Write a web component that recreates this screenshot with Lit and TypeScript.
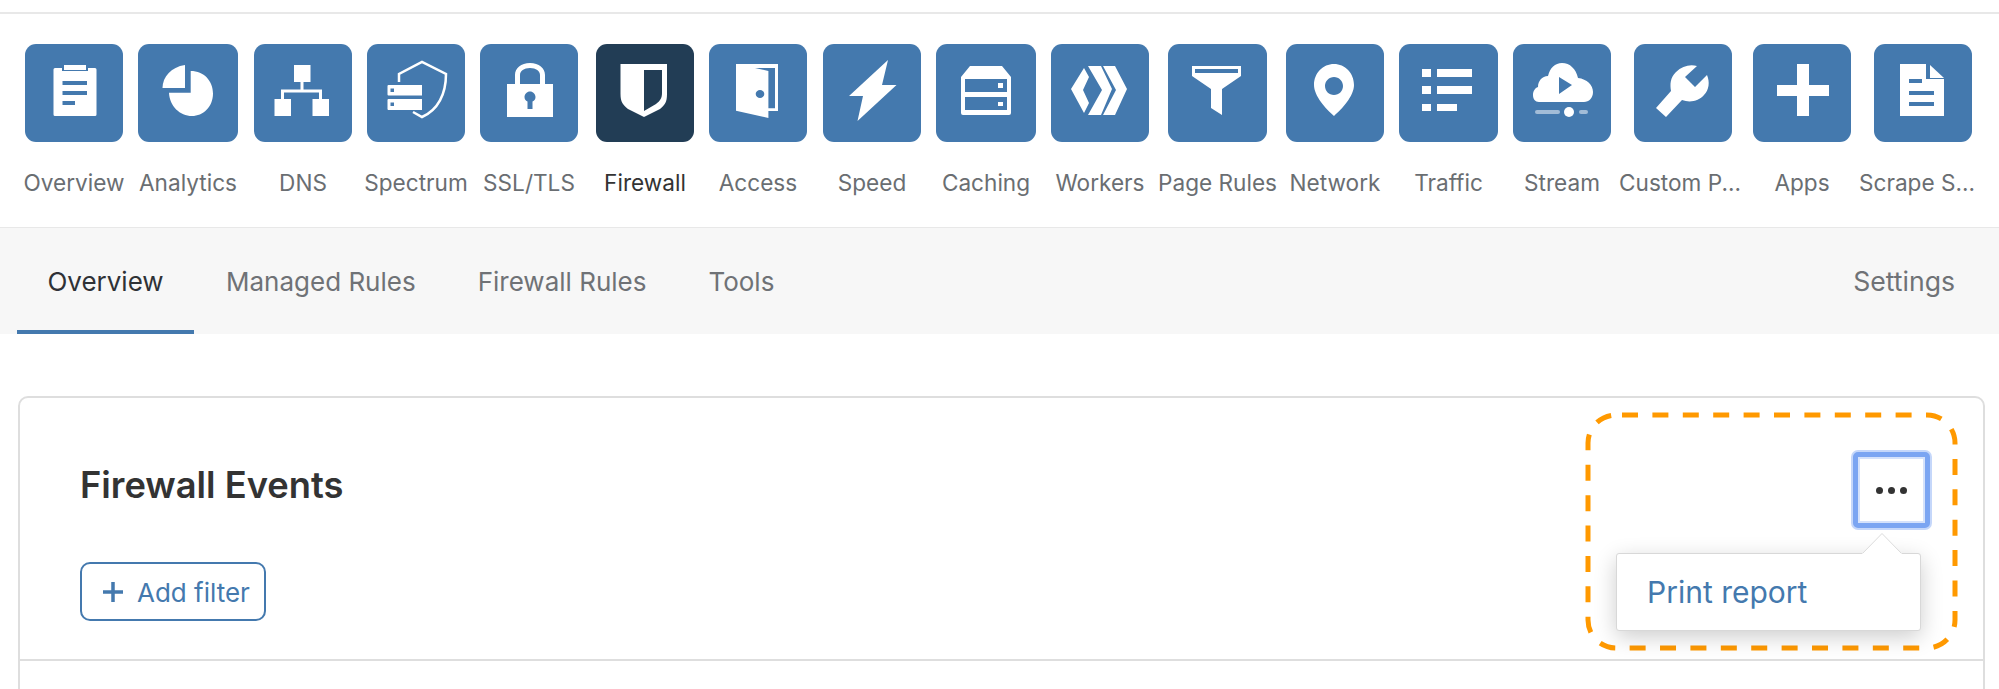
import { LitElement, html, css, svg } from "lit";
import { customElement } from "lit/decorators.js";

const icons: Record<string, unknown> = {
  Overview: svg`<path fill-rule="evenodd" d="M30 24H37V27H63V24H70Q71.500 24 71.500 25.500V70.500Q71.500 72 70 72H30Q28.500 72 28.500 70.500V25.500Q28.500 24 30 24ZM37.500 37V41H62V37ZM37.500 47V51H62V47ZM37.500 57V61H50V57Z"/><rect x="39" y="21" width="22" height="5"/>`,
  Analytics: svg`<path d="M47 21V44H24.500C24.500 33 33 23 47 21Z"/><path d="M52.700 27C66 27 75 37 75 49.500C75 63 65 72 54 72C42 72 31.500 62 31 48.700H52.700Z"/>`,
  DNS: svg`<rect x="40" y="21" width="16.500" height="17"/><rect x="20.500" y="55" width="16.500" height="17"/><rect x="58.500" y="55" width="16.500" height="17"/><path d="M48 38V47M28.500 55V47H66.500V55" fill="none" stroke="#fff" stroke-width="3"/>`,
  Spectrum: svg`<path d="M32 38V30L55 18L79 30C79 50 71 66 55 73L46 68" fill="none" stroke="#fff" stroke-width="2.500"/><path fill-rule="evenodd" d="M21.500 41H55V51.500H21.500Q20.500 51.500 20.500 50.500V42Q20.500 41 21.500 41ZM23.500 44.500V48H27V44.500ZM21.500 55H55V66H21.500Q20.500 66 20.500 65V56Q20.500 55 21.500 55ZM23.500 58.500V62H27V58.500Z"/>`,
  "SSL/TLS": svg`<path d="M27 40H35V31C35 24 41 19 50 19C59 19 65 24 65 31V40H73V73H27ZM40 40H60V31C60 27 56 24 50 24C44 24 40 27 40 31Z" fill-rule="evenodd"/><path d="M50 47.500C47 47.500 44.500 50 44.500 53C44.500 55 45.500 56.500 47.500 57.500V65H52.500V57.500C54.500 56.500 55.500 55 55.500 53C55.500 50 53 47.500 50 47.500Z" fill="#4479ae"/>`,
  Firewall: svg`<path fill-rule="evenodd" d="M24.500 20H71V50C71 58 69 61 64 65L48 73L32 65C27 61 24.500 58 24.500 50ZM48 26V67L60 60C64 57 66 54 66 49V26Z"/>`,
  Access: svg`<path fill-rule="evenodd" d="M27 20H69V67H59.400V74L27 66.700ZM46 24L59.400 27V64.300H66V24Z"/><ellipse cx="51" cy="50" rx="4.300" ry="4" fill="#4479ae"/>`,
  Speed: svg`<path d="M65 16L26 52H40L34.500 77L73.500 41H59Z"/>`,
  Caching: svg`<path fill-rule="evenodd" d="M25 33L34 22H66L75 33V69Q75 71 73 71H27Q25 71 25 69ZM29 35V48H71V35ZM62 39H67V44H62ZM29 53V66H71V53ZM62 58H67V62H62Z"/>`,
  Workers: svg`<path d="M33 24L20 45L33 69L38 59L32 46L38 33Z"/><path d="M37 22H50L61 45L50 71H37L51 46Z"/><path d="M52 22H64L76 45L64 71H52L65 46Z"/>`,
  "Page Rules": svg`<path fill-rule="evenodd" d="M24 22H73V32L54 45V71L43 64V45L24 32ZM27 25V29H70V25Z"/>`,
  Network: svg`<path fill-rule="evenodd" d="M48 20C59 20 68 29 68 41C68 52 56 65 48 72C40 65 28 52 28 41C28 29 37 20 48 20ZM48 33C43 33 39 37 39 42C39 47 43 51 48 51C53 51 57 47 57 42C57 37 53 33 48 33Z"/>`,
  Traffic: svg`<rect x="23" y="25" width="9" height="8"/><rect x="38" y="25" width="35" height="8"/><rect x="23" y="42" width="9" height="8"/><rect x="38" y="42" width="35" height="8"/><rect x="23" y="60" width="9" height="7"/><rect x="38" y="60" width="20" height="7"/>`,
  Stream: svg`<path fill-rule="evenodd" d="M26 58C22 58 20 55 20 51C20 47 22 44 25 43C25 37 29 32 35 32C37 24 42 19 49 19C57 19 63 25 65 34C74 35 80 41 80 48C80 54 76 58 71 58ZM46 33V50L59 41Z"/><rect x="22" y="66" width="25" height="4" rx="2" opacity=".5"/><ellipse cx="56" cy="68" rx="5" ry="5"/><rect x="66" y="66" width="9" height="4" rx="2" opacity=".5"/>`,
  "Custom P...": svg`<path d="M22 64L37 47C36 40 36 34 42 28C48 22 56 20 63 22L51 33L61 43L73 31C76 38 75 46 70 51C65 57 56 59 48 56L32 73Z"/>`,
  Apps: svg`<path d="M44 20H56V41H76V52H56V72H44V52H24V41H44Z"/>`,
  "Scrape S...": svg`<path fill-rule="evenodd" d="M26 20H52V35H70V72H26ZM35 35V39H48V35ZM35 47V51H60V47ZM35 58V62H60V58Z"/><path d="M56 21L70 34H56Z"/>`,
};

const nav: [string, number, number, number?][] = [
  ["Overview", 25, 98], ["Analytics", 138, 100], ["DNS", 254, 98], ["Spectrum", 367, 98],
  ["SSL/TLS", 480, 98], ["Firewall", 596, 98], ["Access", 709, 98], ["Speed", 823, 98],
  ["Caching", 936, 100], ["Workers", 1051, 98], ["Page Rules", 1168, 99], ["Network", 1286, 98],
  ["Traffic", 1399, 99], ["Stream", 1513, 98], ["Custom P...", 1634, 98, 6], ["Apps", 1753, 98],
  ["Scrape S...", 1874, 98, 12],
];

@customElement("app-root")
export class AppRoot extends LitElement {
  static styles = css`
    :host { display: block; width: 1999px; height: 689px; overflow: hidden; background: #fff;
      font-family: Inter, "Liberation Sans", sans-serif; position: relative; }
    .top { border-bottom: 2px solid #e8e8e8; box-sizing: border-box; height: 14px; }
    .strip { display: flex; height: 213px; padding-top: 30px; box-sizing: border-box; }
    .item { display: flex; flex-direction: column; align-items: center; flex: none; }
    .tile { width: 100%; height: 98px; border-radius: 11px; background: #4479ae; flex: none; }
    .tile svg { display: block; width: 98px; height: 98px; fill: #fff; }
    .active .tile { background: #223d55; }
    .label { margin-top: 28px; font-size: 22.600px; line-height: 26px; color: #6a6e72; white-space: nowrap; }
    .active .label { color: #333; }
    .tabs { display: flex; align-items: stretch; height: 107px; background: #f7f7f7; border-top: 1px solid #e8e8e8; box-sizing: border-box; padding: 0 44px 0 17px; }
    .tab { display: flex; align-items: center; justify-content: center; font-size: 26px; color: #6f7276; box-sizing: border-box; }
    .tab.on { color: #2f3236; border-bottom: 4px solid #4479ae; width: 177px; padding: 4px 0 0; margin-right: 32px; }
    .tab.plain { margin-right: 62px; }
    .tab.settings { margin-left: auto; font-size: 26.600px; }
    .main { padding: 62px 14px 0 18px; }
    .card { height: 400px; border: 2px solid #dedede; border-radius: 10px; box-sizing: border-box; }
    .head { height: 263px; box-sizing: border-box; border-bottom: 2px solid #dedede; padding: 62px 0 0 60px; }
    h1 { margin: 0; font-size: 36.300px; line-height: 50px; font-weight: 600; color: #333; }
    .add { display: flex; align-items: center; gap: 14px; width: 186px; height: 59px; margin-top: 52px; box-sizing: border-box;
      border: 2px solid #4479ae; border-radius: 10px; padding: 2px 0 0 21px; color: #4479ae; font-size: 26px; background: #fff; }
    .add svg { width: 20px; height: 20px; flex: none; margin-top: -2px; }
    .more { position: absolute; left: 1853px; top: 452px; width: 77px; height: 76px; box-sizing: border-box; border: 5px solid #7ba5f2;
      border-radius: 5px; box-shadow: 0 0 0 2px #c5d7fa, inset 0 0 0 2px #d5e2fb; display: flex; align-items: center; justify-content: center; gap: 5px; background: #fff; }
    .more i { width: 7px; height: 7px; border-radius: 50%; background: #333; }
    .menu { position: absolute; left: 1616px; top: 553px; width: 305px; height: 78px; box-sizing: border-box; background: #fff;
      border: 1px solid #d8d8d8; border-radius: 3px; box-shadow: 0 6px 22px rgba(0,0,0,.2); padding-left: 30px; display: flex; align-items: center; color: #4479ae; font-size: 30px; }
    .arrow { position: absolute; left: 1862px; top: 533px; width: 40px; height: 21px; display: block; overflow: visible; }
    .mark { position: absolute; left: 1585px; top: 411px; width: 374px; height: 241px; display: block; }
  `;

  render() {
    let right = 0;
    return html`
      <div class="top"></div>
      <div class="strip">
        ${nav.map(([label, x, w, shift]) => {
          const gap = x - right;
          right = x + w;
          return html`<div class="item ${label === "Firewall" ? "active" : ""}" style="width:${w}px;margin-left:${gap}px">
            <div class="tile"><svg viewBox="0 0 98 98">${icons[label]}</svg></div>
            <div class="label" style="margin-right:${shift ?? 0}px">${label}</div>
          </div>`;
        })}
      </div>
      <div class="tabs">
        <div class="tab on">Overview</div>
        <div class="tab plain">Managed Rules</div>
        <div class="tab plain">Firewall Rules</div>
        <div class="tab plain">Tools</div>
        <div class="tab settings">Settings</div>
      </div>
      <div class="main">
        <div class="card">
          <div class="head">
            <h1>Firewall Events</h1>
            <div class="add">
              <svg viewBox="0 0 20 20"><path d="M10 0V20M0 10H20" stroke="#4479ae" stroke-width="3.500" fill="none"/></svg>
              <span>Add filter</span>
            </div>
          </div>
        </div>
      </div>
      <svg class="mark" viewBox="0 0 374 241">
        <rect x="3" y="4" width="367" height="233" rx="28" fill="none" stroke="#ff9900" stroke-width="5" stroke-dasharray="16 14.400" stroke-dashoffset="-6"/>
      </svg>
      <div class="more"><i></i><i></i><i></i></div>
      <div class="menu">Print report</div>
      <svg class="arrow" viewBox="0 0 40 21"><path d="M0 21L20 0L40 21Z" fill="#fff"/><path d="M1 20L20 0.500L39 20" fill="none" stroke="#dcdcdc" stroke-width="1"/></svg>
    `;
  }
}
